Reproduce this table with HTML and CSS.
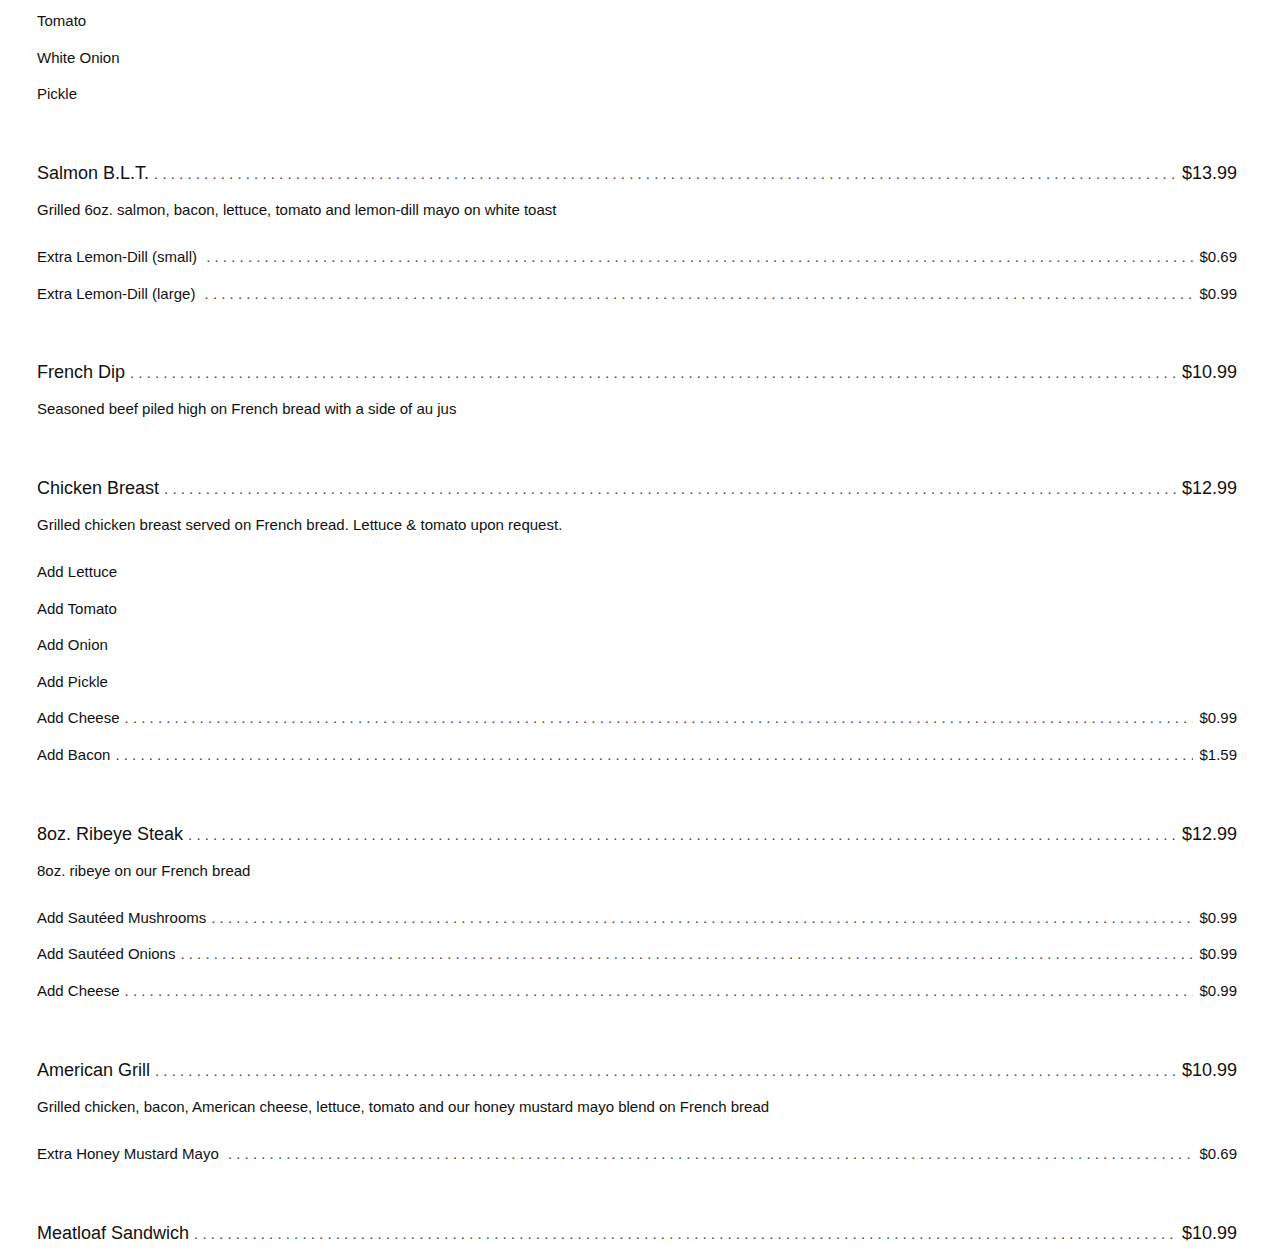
FILE: index.html
```html
<!DOCTYPE html>
<html>
<head>
<meta charset="utf-8">
<link rel="stylesheet" href="styles.css">
</head>
<body>
<div class="menu">
  <div class="opts first">
    <div class="row opt"><span class="name">Tomato</span></div>
    <div class="row opt"><span class="name">White Onion</span></div>
    <div class="row opt"><span class="name">Pickle</span></div>
  </div>

  <section class="item">
    <div class="row title"><span class="name">Salmon B.L.T.</span><span class="leader"></span><span class="price">$13.99</span></div>
    <div class="row desc">Grilled 6oz. salmon, bacon, lettuce, tomato and lemon-dill mayo on white toast</div>
    <div class="opts">
      <div class="row opt"><span class="name">Extra Lemon-Dill (small)&nbsp;</span><span class="leader"></span><span class="price">$0.69</span></div>
      <div class="row opt"><span class="name">Extra Lemon-Dill (large)&nbsp;</span><span class="leader"></span><span class="price">$0.99</span></div>
    </div>
  </section>

  <section class="item">
    <div class="row title"><span class="name">French Dip</span><span class="leader"></span><span class="price">$10.99</span></div>
    <div class="row desc">Seasoned beef piled high on French bread with a side of au jus</div>
  </section>

  <section class="item">
    <div class="row title"><span class="name">Chicken Breast</span><span class="leader"></span><span class="price">$12.99</span></div>
    <div class="row desc">Grilled chicken breast served on French bread. Lettuce &amp; tomato upon request.</div>
    <div class="opts">
      <div class="row opt"><span class="name">Add Lettuce</span></div>
      <div class="row opt"><span class="name">Add Tomato</span></div>
      <div class="row opt"><span class="name">Add Onion</span></div>
      <div class="row opt"><span class="name">Add Pickle</span></div>
      <div class="row opt"><span class="name">Add Cheese</span><span class="leader"></span><span class="price">$0.99</span></div>
      <div class="row opt"><span class="name">Add Bacon</span><span class="leader"></span><span class="price">$1.59</span></div>
    </div>
  </section>

  <section class="item">
    <div class="row title"><span class="name">8oz. Ribeye Steak</span><span class="leader"></span><span class="price">$12.99</span></div>
    <div class="row desc">8oz. ribeye on our French bread</div>
    <div class="opts">
      <div class="row opt"><span class="name">Add Sautéed Mushrooms</span><span class="leader"></span><span class="price">$0.99</span></div>
      <div class="row opt"><span class="name">Add Sautéed Onions</span><span class="leader"></span><span class="price">$0.99</span></div>
      <div class="row opt"><span class="name">Add Cheese</span><span class="leader"></span><span class="price">$0.99</span></div>
    </div>
  </section>

  <section class="item">
    <div class="row title"><span class="name">American Grill</span><span class="leader"></span><span class="price">$10.99</span></div>
    <div class="row desc">Grilled chicken, bacon, American cheese, lettuce, tomato and our honey mustard mayo blend on French bread</div>
    <div class="opts">
      <div class="row opt"><span class="name">Extra Honey Mustard Mayo&nbsp;</span><span class="leader"></span><span class="price">$0.69</span></div>
    </div>
  </section>

  <section class="item">
    <div class="row title"><span class="name">Meatloaf Sandwich</span><span class="leader"></span><span class="price">$10.99</span></div>
  </section>
</div>
</body>
</html>
```

FILE: styles.css
```css
html, body {
  margin: 0;
  padding: 0;
  background: #fff;
}

body {
  font-family: "Liberation Sans", Arial, sans-serif;
  color: #111;
  overflow: hidden;
}

.menu {
  width: 1200px;
  padding: 3px 37px 0 37px;
}

.row {
  display: flex;
  align-items: baseline;
  height: 36.5px;
  line-height: 36.5px;
  font-size: 15px;
  white-space: nowrap;
}

.title {
  font-size: 18px;
  height: 37px;
  line-height: 37px;
}

.item {
  margin-top: 42.25px;
}

.opts {
  margin-top: 10.75px;
}

.opts.first {
  margin-top: 0;
}

.name {
  flex: none;
  padding-right: 5px;
}

.leader {
  flex: 1 1 auto;
  overflow: hidden;
  font-size: 15px;
  color: #444;
  margin-right: 4px;
}

.leader::before {
  content: ". . . . . . . . . . . . . . . . . . . . . . . . . . . . . . . . . . . . . . . . . . . . . . . . . . . . . . . . . . . . . . . . . . . . . . . . . . . . . . . . . . . . . . . . . . . . . . . . . . . . . . . . . . . . . . . . . . . . . . . . . . . . . . . . . . . . . . . . . . . . . . . . . . . . . . . . . . . . . . . . . . . . . . . . . . . . . . . . . . . . . . . . . . . . . . . . . . . . . . . .";
}

.price {
  flex: none;
}

.opt .leader {
  margin-right: 6px;
}
```
